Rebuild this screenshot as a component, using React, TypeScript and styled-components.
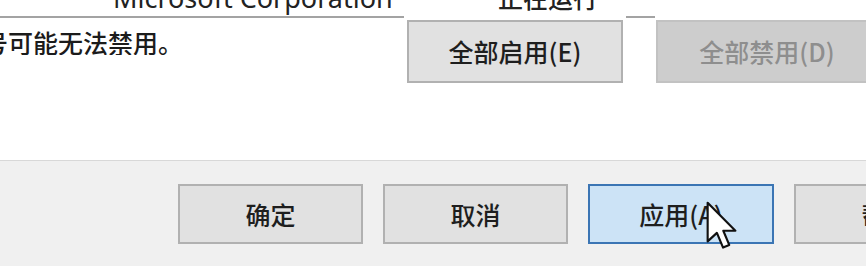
import styled, { createGlobalStyle } from 'styled-components'

const Global = createGlobalStyle`
	html, body {
		margin: 0;
		padding: 0;
		background: #ffffff;
		overflow: hidden;
	}
	body {
		font-family: "Noto Sans CJK SC", "Noto Sans", sans-serif;
		color: #1b1b1b;
	}
`

const Window = styled.div`
	width: 866px;
	height: 266px;
	display: flex;
	flex-direction: column;
	overflow: hidden;
`

const ListArea = styled.div`
	height: 160px;
	background: #ffffff;
	border-bottom: 1px solid #d8d8d8;
	display: flex;
	flex-direction: column;
	flex-shrink: 0;
`

const ListTail = styled.div`
	display: flex;
	height: 18px;
	flex-shrink: 0;
`

const TailCell = styled.div<{ $width: number; $pad?: number; $lined?: boolean }>`
	display: flex;
	width: ${p => p.$width}px;
	flex-shrink: 0;
	box-sizing: border-box;
	padding-left: ${p => p.$pad ?? 0}px;
	border-bottom: ${p => (p.$lined ? '2px solid #a3a3a3' : 'none')};
	white-space: nowrap;
`

const LatinText = styled.span`
	font-family: "Noto Sans", sans-serif;
	font-size: 27px;
	line-height: 27px;
	margin-top: -16px;
	color: #222;
`

const CjkText = styled.span`
	font-size: 25px;
	line-height: 25px;
	font-weight: 500;
	margin-top: -15px;
	color: #222;
`

const ActionRow = styled.div`
	display: flex;
	padding-top: 2px;
	align-items: flex-start;
`

const Note = styled.div`
	width: 407px;
	flex-shrink: 0;
	overflow: hidden;
	font-size: 25px;
	line-height: 25px;
	font-weight: 500;
	padding-top: 10px;
	white-space: nowrap;
	span {
		margin-left: -17px;
	}
`

const Button = styled.button<{ $width: number; $state?: 'normal' | 'disabled' | 'active' }>`
	width: ${p => p.$width}px;
	flex-shrink: 0;
	box-sizing: border-box;
	display: flex;
	align-items: center;
	justify-content: center;
	padding: 0;
	font-family: "Noto Sans CJK SC", "Noto Sans", sans-serif;
	font-size: 25px;
	line-height: 25px;
	font-weight: 500;
	white-space: nowrap;
	cursor: default;
	border: 2px solid
		${p => (p.$state === 'active' ? '#3b75b4' : p.$state === 'disabled' ? '#c2c2c2' : '#b1b1b1')};
	background: ${p =>
		p.$state === 'active' ? '#cce3f6' : p.$state === 'disabled' ? '#cdcdcd' : '#e1e1e1'};
	color: ${p => (p.$state === 'disabled' ? '#8e8e8e' : '#1e1e1e')};
`

const TopButton = styled(Button)`
	height: 63px;
`

const Gap = styled.div<{ $width: number }>`
	width: ${p => p.$width}px;
	flex-shrink: 0;
`

const Footer = styled.div`
	position: relative;
	height: 104px;
	flex-shrink: 0;
	background: #f0f0f0;
	border-bottom: 1px solid #8f8f8f;
	display: flex;
	gap: 20px;
	padding: 23px 0 0 178px;
	box-sizing: content-box;
	overflow: hidden;
`

const DialogButton = styled(Button)`
	height: 60px;
`

const Pointer = styled.svg`
	position: absolute;
	left: 706px;
	top: 40px;
	pointer-events: none;
`

const ArrowCursor = () => (
	<Pointer width="32" height="50" viewBox="0 0 13.5 21">
		<path
			d="M0.7 0.7 L0.7 17 L4.6 13.4 L7.2 19.6 L9.8 18.5 L7.3 12.5 L12.4 12.5 Z"
			fill="#ffffff"
			stroke="#111111"
			strokeWidth="0.9"
			strokeLinejoin="round"
		/>
	</Pointer>
)

export default function App() {
	return (
		<Window>
			<Global />
			<ListArea>
				<ListTail>
					<TailCell $width={404} $pad={113} $lined>
						<LatinText>Microsoft Corporation</LatinText>
					</TailCell>
					<TailCell $width={222} $pad={94}>
						<CjkText>正在运行</CjkText>
					</TailCell>
					<TailCell $width={29} $lined />
				</ListTail>
				<ActionRow>
					<Note>
						<span>号可能无法禁用。</span>
					</Note>
					<TopButton $width={216}>全部启用(E)</TopButton>
					<Gap $width={33} />
					<TopButton $width={222} $state="disabled">全部禁用(D)</TopButton>
				</ActionRow>
			</ListArea>
			<Footer>
				<DialogButton $width={185}>确定</DialogButton>
				<DialogButton $width={185}>取消</DialogButton>
				<DialogButton $width={186} $state="active">应用(A)</DialogButton>
				<DialogButton $width={185}>帮助</DialogButton>
				<ArrowCursor />
			</Footer>
		</Window>
	)
}
